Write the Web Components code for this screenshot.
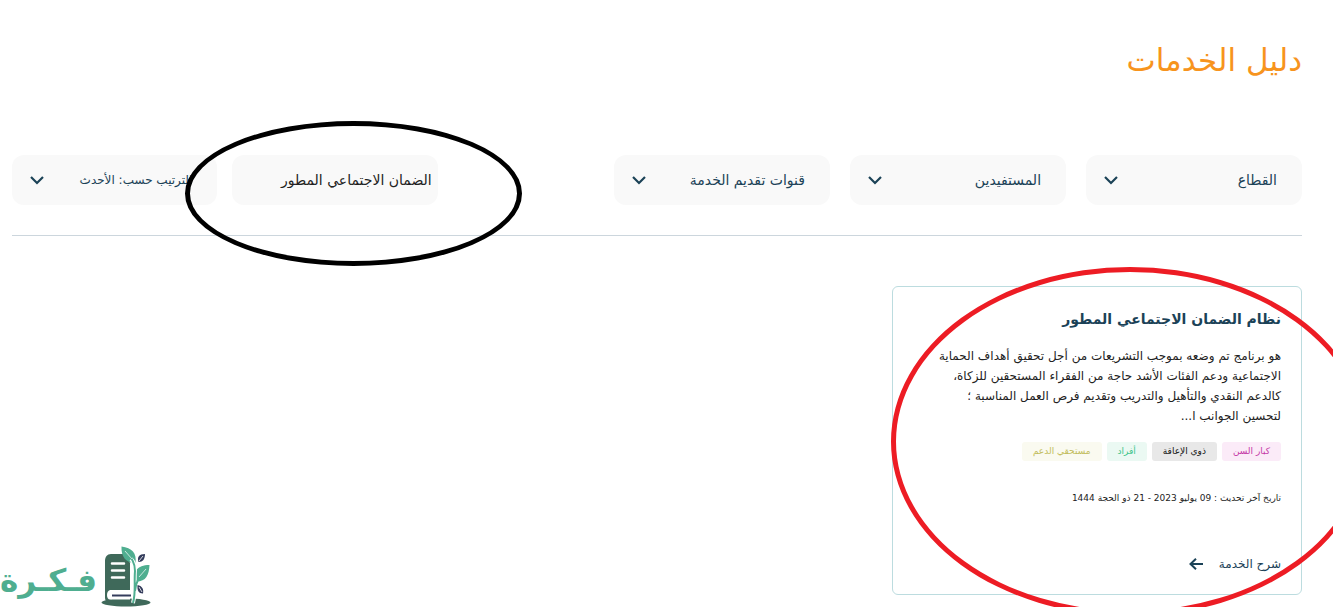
<!DOCTYPE html>
<html lang="ar" dir="rtl">
<head>
<meta charset="utf-8">
<meta name="viewport" content="width=device-width, initial-scale=1">
<title>دليل الخدمات</title>
<style>
    body {
        margin: 0;
        background-color: white;
        color: #1b4257;
        font-family: "DejaVu Sans", sans-serif;
    }
</style>
</head>
<body>
<services-page></services-page>

<script>
// ink-ring.js
class InkRing extends HTMLElement {
    constructor() {
        super();

        this.attachShadow({ mode: 'open' });
    }

    connectedCallback() {
        this.shadowRoot.innerHTML = `
            <style>
            :host {
                position: absolute;
                z-index: 2;

                box-sizing: border-box;

                border: 5px solid var(--ink, black);
                border-radius: 50%;
                pointer-events: none;
            }
            </style>
          `;
    }
}

customElements.define('ink-ring', InkRing);

// filter-select.js
class FilterSelect extends HTMLElement {
    constructor() {
        super();

        this.attachShadow({ mode: 'open' });
    }

    connectedCallback() {
        const label = this.getAttribute('label');

        this.shadowRoot.innerHTML = `
            <style>
            :host {
                display: grid;
                align-items: center;

                font-size: 14px;
            }

            :host([compact]) {
                font-size: 12px;
            }

            select, svg {
                grid-area: 1 / 1;
            }

            select {
                appearance: none;
                box-sizing: border-box;
                width: 100%;
                height: 50px;
                margin: 0;
                padding: 0 25px 0 44px;

                background-color: #f9f9f9;
                border: 0;
                border-radius: 12px;
                color: inherit;
                font: inherit;
                line-height: 20px;
            }

            svg {
                justify-self: end;
                margin-inline-end: 18px;
                pointer-events: none;
            }
            </style>
            <select aria-label="${label}">
              <option>${label}</option>
            </select>
            <svg width="14" height="10" viewBox="0 0 14 10" fill="none" stroke="#1b4257" stroke-width="2.2">
              <path d="M1 2 L7 8 L13 2"/>
            </svg>
          `;
    }
}

customElements.define('filter-select', FilterSelect);

// search-box.js
class SearchBox extends HTMLElement {
    constructor() {
        super();

        this.attachShadow({ mode: 'open' });
    }

    connectedCallback() {
        this.shadowRoot.innerHTML = `
            <style>
            :host {
                display: block;
                position: relative;
            }

            input {
                box-sizing: border-box;
                width: 100%;
                height: 50px;
                margin: 0;
                padding: 0 6px;

                background-color: #f9f9f9;
                border: 0;
                border-radius: 12px;
                color: #222;
                font: 14px/20px "DejaVu Sans", sans-serif;
            }

            ink-ring {
                top: -34px;
                left: -47px;

                width: 337px;
                height: 145px;
            }
            </style>
            <input type="text" aria-label="بحث" value="${this.getAttribute('value')}">
            <ink-ring></ink-ring>
          `;
    }
}

customElements.define('search-box', SearchBox);

// tag-chip.js
class TagChip extends HTMLElement {
    constructor() {
        super();

        this.attachShadow({ mode: 'open' });
    }

    connectedCallback() {
        this.shadowRoot.innerHTML = `
            <style>
            :host {
                display: block;
                padding: 0 11px;

                border-radius: 3px;
                font-size: 9px;
                line-height: 19px;
                white-space: nowrap;
            }

            :host([tone="pink"]) { background-color: #fbebf8; color: #c438a6; }
            :host([tone="grey"]) { background-color: #e8e8e8; color: #111; }
            :host([tone="green"]) { background-color: #ebf9f3; color: #3cc48a; }
            :host([tone="olive"]) { background-color: #fafaf0; color: #c2bd5c; }
            </style>
            <slot></slot>
          `;
    }
}

customElements.define('tag-chip', TagChip);

// service-card.js
class ServiceCard extends HTMLElement {
    constructor() {
        super();

        this.attachShadow({ mode: 'open' });
    }

    connectedCallback() {
        this.shadowRoot.innerHTML = `
            <style>
            :host {
                display: flex;
                flex-direction: column;
                position: relative;

                padding: 20px;

                border: 1px solid #bcdcdf;
                border-radius: 6px;
            }

            h2 {
                margin: 0 0 15px;

                font-size: 14px;
                line-height: 24px;
            }

            p {
                margin: 0;
                padding-inline-end: 16px;

                color: #222;
                font-size: 12px;
                line-height: 20px;
            }

            .tags {
                display: flex;
                gap: 5px;
                margin: 16px 0 27px;
            }

            .date {
                font-size: 9px;
            }

            a {
                display: flex;
                align-items: center;
                align-self: start;
                gap: 16px;
                margin-top: 46px;

                color: inherit;
                font-size: 12px;
                line-height: 20px;
                text-decoration: none;
            }

            ink-ring {
                --ink: #ed1c24;
                top: -20px;
                left: -2px;

                width: 478px;
                height: 349px;
            }
            </style>
            <h2>${this.getAttribute('title')}</h2>
            <p><slot></slot></p>
            <div class="tags"><slot name="tags"></slot></div>
            <p class="date"><slot name="date"></slot></p>
            <a href="#">
              شرح الخدمة
              <svg width="14" height="12" viewBox="0 0 14 12" fill="none" stroke="#1b4257" stroke-width="2">
                <path d="M14 6 H1.5 M7 0.8 L1.5 6 L7 11.2"/>
              </svg>
            </a>
            <ink-ring></ink-ring>
          `;
    }
}

customElements.define('service-card', ServiceCard);

// fikra-logo.js
class FikraLogo extends HTMLElement {
    constructor() {
        super();

        this.attachShadow({ mode: 'open' });
    }

    connectedCallback() {
        this.shadowRoot.innerHTML = `
            <style>
            :host {
                display: flex;
                align-items: end;
                gap: 4px;
                position: absolute;
                bottom: 0;
                left: 0;

                color: #4fae90;
                font-size: 31px;
                font-weight: bold;
                line-height: 54px;
            }
            </style>
            <svg width="50" height="62" viewBox="0 0 50 62">
              <ellipse cx="25" cy="57.5" rx="24.5" ry="4" fill="#3f695a"/>
              <path d="M10 9 H25 L29 18 V45 H9 C5 46 5 54 9 55 H31 V57 H7 C4 56 4 54 4 51 V16 C4 12 6 9 10 9Z" fill="#3f695a"/>
              <path d="M10 46.500 H29 V54.500 H10 C6.500 54 6.500 47 10 46.500Z" fill="white"/>
              <path d="M11 50.500 H30" stroke="#343c5c" stroke-width="2"/>
              <path d="M11 18.500 H23 M11 25.500 H23 M11 32.500 H23" stroke="white" stroke-width="2.500" stroke-linecap="round"/>
              <path d="M20.500 1.500 C31 3 36 8 34.500 18 C25 18 20 12 20.500 1.500Z M48.500 20 C36 20 31 27 35.500 36.500 C45 36.500 48 30 48.500 20Z" fill="#4fae90"/>
              <path d="M30 14 C33 17 34 20 34 25 C33 37 35 47 32 58" fill="none" stroke="white" stroke-width="4"/>
              <path d="M24 6 C31 13 34 18 34 26 C33 38 35 48 32 58 M45 24 C38 32 35 36 34 46" fill="none" stroke="#4fae90" stroke-width="2"/>
              <path d="M24 6 L31 14 M45 24 L38 32" stroke="white" stroke-width="0.700"/>
              <path d="M44 9 C38 9 36 12 37.500 17 C42 17 44 14 44 9Z M36.500 40 C41 41 43 44 42 48.500 C37.500 48.500 36 45 36.500 40Z" fill="#343c5c"/>
              <path d="M42 11 L38 16 M38 42 L41 47" stroke="white" stroke-width="0.800"/>
            </svg>
            <span>فـكـرة</span>
          `;
    }
}

customElements.define('fikra-logo', FikraLogo);

// services-page.js
class ServicesPage extends HTMLElement {
    constructor() {
        super();

        this.attachShadow({ mode: 'open' });
    }

    connectedCallback() {
        this.shadowRoot.innerHTML = `
            <style>
            :host {
                display: block;
                position: relative;
                overflow: hidden;

                box-sizing: border-box;
                min-height: 100vh;
                padding: 40px 31px 12px 12px;
            }

            h1 {
                margin: 0 0 75px;

                color: #f7941d;
                font-size: 31px;
                font-weight: normal;
                line-height: 40px;
            }

            .filters {
                display: flex;
                justify-content: space-between;

                padding-bottom: 30px;

                border-bottom: 1px solid #ccd6dd;
            }

            .facets {
                display: grid;
                flex: 0 0 53.333%;
                grid-template-columns: repeat(3, 1fr);
                gap: 20px;
            }

            .tools {
                display: grid;
                flex: 0 0 33%;
                grid-template-columns: repeat(2, 1fr);
                gap: 15px;
            }

            .cards {
                display: grid;
                grid-template-columns: repeat(3, 1fr);
                gap: 30px;
                margin-top: 50px;
            }
            </style>
            <h1>دليل الخدمات</h1>
            <div class="filters">
              <div class="facets">
                <filter-select label="القطاع"></filter-select>
                <filter-select label="المستفيدين"></filter-select>
                <filter-select label="قنوات تقديم الخدمة"></filter-select>
              </div>
              <div class="tools">
                <search-box value="الضمان الاجتماعي المطور"></search-box>
                <filter-select compact label="الترتيب حسب: الأحدث"></filter-select>
              </div>
            </div>
            <div class="cards">
              <service-card title="نظام الضمان الاجتماعي المطور">
                هو برنامج تم وضعه بموجب التشريعات من أجل تحقيق أهداف الحماية الاجتماعية ودعم الفئات الأشد حاجة من الفقراء المستحقين للزكاة، كالدعم النقدي والتأهيل والتدريب وتقديم فرص العمل المناسبة ؛ لتحسين الجوانب ا...
                <tag-chip slot="tags" tone="pink">كبار السن</tag-chip>
                <tag-chip slot="tags" tone="grey">ذوي الإعاقة</tag-chip>
                <tag-chip slot="tags" tone="green">أفراد</tag-chip>
                <tag-chip slot="tags" tone="olive">مستحقي الدعم</tag-chip>
                <span slot="date">تاريخ آخر تحديث : 09 يوليو 2023 - 21 ذو الحجة 1444</span>
              </service-card>
            </div>
            <fikra-logo></fikra-logo>
          `;
    }
}

customElements.define('services-page', ServicesPage);
</script>
</body>
</html>
